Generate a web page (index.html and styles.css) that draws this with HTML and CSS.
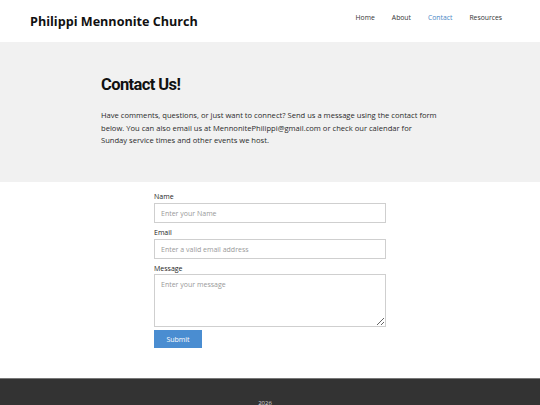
FILE: index.html
```html
<!DOCTYPE html>
<html>
<head>
<meta charset="utf-8">
<link rel="stylesheet" href="styles.css">
</head>
<body>
<header class="site-header">
  <div class="logo">Philippi Mennonite Church</div>
  <nav class="nav">
    <a class="nav-link">Home</a>
    <a class="nav-link">About</a>
    <a class="nav-link active">Contact</a>
    <a class="nav-link">Resources</a>
  </nav>
</header>
<section class="hero">
  <div class="hero-inner">
    <h1 class="hero-title">Contact Us!</h1>
    <p class="hero-text">Have comments, questions, or just want to connect? Send us a message using the contact form below. You can also email us at MennonitePhilippi@gmail.com or check our calendar for Sunday service times and other events we host.</p>
  </div>
</section>
<main class="form-wrap">
  <form class="contact-form">
    <label class="label">Name</label>
    <input class="field" type="text" placeholder="Enter your Name">
    <label class="label">Email</label>
    <input class="field" type="text" placeholder="Enter a valid email address">
    <label class="label">Message</label>
    <textarea class="field area" placeholder="Enter your message"></textarea>
    <button class="submit" type="button">Submit</button>
  </form>
</main>
<footer class="footer">
  <div class="footer-text">2026</div>
</footer>
</body>
</html>
```
FILE: styles.css
```css
html, body {
  margin: 0;
  padding: 0;
  background: #ffffff;
  font-family: "Open Sans", "Liberation Sans", sans-serif;
  color: #222;
}
.site-header {
  height: 42px;
  display: flex;
  align-items: center;
  justify-content: space-between;
  padding: 0 38px 0 30px;
  box-sizing: border-box;
}
.logo {
  font-weight: 700;
  font-size: 12.6px;
  color: #111;
  margin-top: 0;
}
.nav {
  display: flex;
  margin-top: -8px;
}
.nav-link {
  font-size: 6.8px;
  color: #333;
  margin-left: 17px;
}
.nav-link.active {
  color: #4a86c5;
}
.hero {
  background: #f1f1f1;
  height: 140px;
  box-sizing: border-box;
  padding: 32px 0 0 101px;
}
.hero-inner {
  width: 337px;
}
.hero-title {
  font-family: Roboto, "Liberation Sans", sans-serif;
  font-weight: 700;
  font-size: 16.5px;
  letter-spacing: -0.6px;
  margin: 0 0 13px 0;
  color: #111;
  line-height: 22px;
}
.hero-text {
  margin: 0;
  font-size: 7.6px;
  line-height: 12.5px;
  color: #2a2a2a;
}
.form-wrap {
  height: 196px;
  padding: 10px 0 0 154px;
  box-sizing: border-box;
}
.contact-form {
  width: 232px;
  display: flex;
  flex-direction: column;
}
.label {
  font-size: 7px;
  color: #222;
  line-height: 10px;
  margin-bottom: 1px;
}
.field {
  box-sizing: border-box;
  height: 20px;
  border: 1px solid #cfcfcf;
  padding: 0 6px;
  font-family: "Open Sans", "Liberation Sans", sans-serif;
  font-size: 7px;
  margin: 0 0 5px 0;
  background: #fff;
}
.field::placeholder {
  color: #999;
}
.area {
  height: 53px;
  padding-top: 5px;
  resize: vertical;
  margin-top: -1px;
  margin-bottom: 4px;
}
.submit {
  width: 48px;
  height: 18px;
  background: #4a8dd1;
  border: none;
  color: #fff;
  font-family: "Open Sans", "Liberation Sans", sans-serif;
  font-size: 7px;
  padding: 0;
  margin-top: -1px;
}
.footer {
  background: #333333;
  border-top: 1px solid #777;
  height: 40px;
  box-sizing: border-box;
  padding-top: 20px;
}
.footer-text {
  text-align: center;
  color: #ddd;
  font-size: 6px;
  line-height: 8px;
  margin-left: -10px;
}
```
